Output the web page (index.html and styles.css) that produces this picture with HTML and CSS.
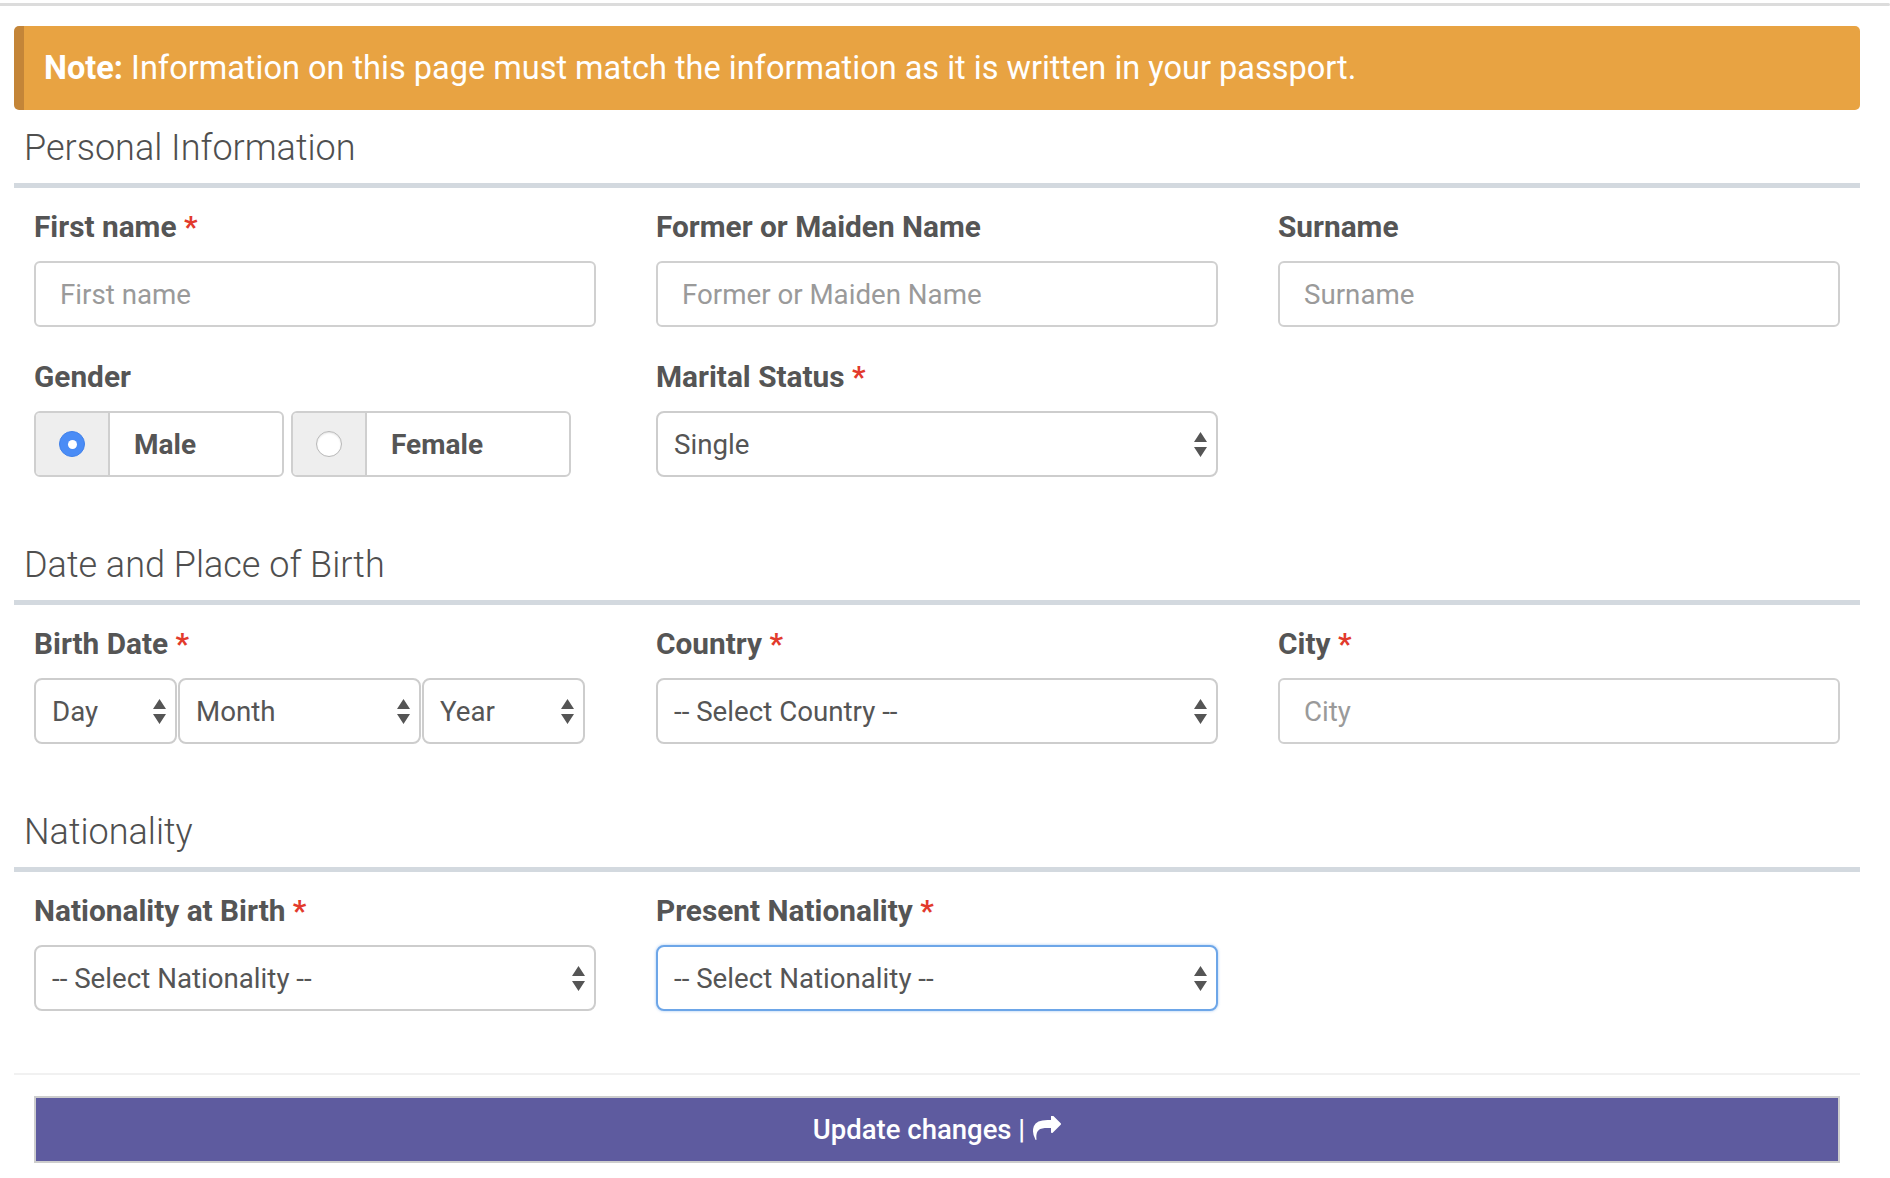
FILE: index.html
```html
<!DOCTYPE html>
<html lang="en">
<head>
<meta charset="utf-8">
<title>Personal Information</title>
<link rel="stylesheet" href="styles.css">
</head>
<body>
<div class="topline"></div>
<div class="page">
  <div class="note"><p class="note-text"><strong>Note:</strong> Information on this page must match the information as it is written in your passport.</p></div>

  <section class="section">
    <h2 class="section-title">Personal Information</h2>
    <div class="fields">
      <div class="field">
        <label class="label">First name <span class="req">*</span></label>
        <input class="input" type="text" placeholder="First name">
      </div>
      <div class="field">
        <label class="label">Former or Maiden Name</label>
        <input class="input" type="text" placeholder="Former or Maiden Name">
      </div>
      <div class="field">
        <label class="label">Surname</label>
        <input class="input" type="text" placeholder="Surname">
      </div>
      <div class="field">
        <label class="label">Gender</label>
        <div class="gender">
          <div class="radio-group">
            <span class="addon"><span class="radio checked"></span></span>
            <span class="radio-label">Male</span>
          </div>
          <div class="radio-group">
            <span class="addon"><span class="radio"></span></span>
            <span class="radio-label">Female</span>
          </div>
        </div>
      </div>
      <div class="field">
        <label class="label">Marital Status <span class="req">*</span></label>
        <div class="select"><span>Single</span><svg class="arrows" viewBox="0 0 13 25" width="13" height="25"><path d="M0 10 L6.5 0 L13 10 Z M0 15 L13 15 L6.5 25 Z"/></svg></div>
      </div>
    </div>
  </section>

  <section class="section">
    <h2 class="section-title">Date and Place of Birth</h2>
    <div class="fields">
      <div class="field">
        <label class="label">Birth Date <span class="req">*</span></label>
        <div class="date">
          <div class="select day"><span>Day</span><svg class="arrows" viewBox="0 0 13 25" width="13" height="25"><path d="M0 10 L6.5 0 L13 10 Z M0 15 L13 15 L6.5 25 Z"/></svg></div>
          <div class="select month"><span>Month</span><svg class="arrows" viewBox="0 0 13 25" width="13" height="25"><path d="M0 10 L6.5 0 L13 10 Z M0 15 L13 15 L6.5 25 Z"/></svg></div>
          <div class="select year"><span>Year</span><svg class="arrows" viewBox="0 0 13 25" width="13" height="25"><path d="M0 10 L6.5 0 L13 10 Z M0 15 L13 15 L6.5 25 Z"/></svg></div>
        </div>
      </div>
      <div class="field">
        <label class="label">Country <span class="req">*</span></label>
        <div class="select"><span>-- Select Country --</span><svg class="arrows" viewBox="0 0 13 25" width="13" height="25"><path d="M0 10 L6.5 0 L13 10 Z M0 15 L13 15 L6.5 25 Z"/></svg></div>
      </div>
      <div class="field">
        <label class="label">City <span class="req">*</span></label>
        <input class="input" type="text" placeholder="City">
      </div>
    </div>
  </section>

  <section class="section">
    <h2 class="section-title">Nationality</h2>
    <div class="fields">
      <div class="field">
        <label class="label">Nationality at Birth <span class="req">*</span></label>
        <div class="select"><span>-- Select Nationality --</span><svg class="arrows" viewBox="0 0 13 25" width="13" height="25"><path d="M0 10 L6.5 0 L13 10 Z M0 15 L13 15 L6.5 25 Z"/></svg></div>
      </div>
      <div class="field">
        <label class="label">Present Nationality <span class="req">*</span></label>
        <div class="select focus"><span>-- Select Nationality --</span><svg class="arrows" viewBox="0 0 13 25" width="13" height="25"><path d="M0 10 L6.5 0 L13 10 Z M0 15 L13 15 L6.5 25 Z"/></svg></div>
      </div>
    </div>
  </section>

  <div class="divider"></div>
  <button class="btn" type="button"><span>Update changes |</span><svg class="share" viewBox="0 160 1792 1472" width="28" height="24"><path d="M1792 640q0 26-19 45l-512 512q-19 19-45 19t-45-19-19-45v-256h-224q-98 0-175.5 6t-154 21.5-133 42.5-105.5 69.5-80 101-48.5 138.5-17.5 181q0 55 5 123 0 6 2.5 23.5t2.5 26.5q0 15-8.5 25t-23.5 10q-16 0-28-17-7-9-13-22t-13.5-30-10.5-24q-127-285-127-451 0-199 53-333 162-403 875-403h224v-256q0-26 19-45t45-19 45 19l512 512q19 19 19 45z"/></svg></button>
</div>
</body>
</html>
```

FILE: styles.css
```css
body {
  margin: 0;
  font-family: Roboto, "Liberation Sans", Arial, sans-serif;
  color: #555;
  background: #fff;
}

.topline {
  height: 3px;
  margin-top: 3px;
  background: #dcdcdc;
  border-radius: 0 2px 2px 0;
}

.page {
  padding: 0 30px 0 14px;
}

.note {
  margin-top: 20px;
  height: 84px;
  box-sizing: border-box;
  display: flex;
  align-items: center;
  background: #e8a342;
  border-left: 10px solid #c48538;
  border-radius: 5px;
  padding-left: 20px;
  color: #fff;
}

.note-text {
  margin: 0;
  font-size: 32.5px;
  line-height: 40px;
}

.note-text strong {
  font-weight: 700;
}

.section-title {
  margin: 18px 0 0;
  padding: 0 10px 15px;
  font-size: 36px;
  font-weight: 300;
  line-height: 40px;
  color: #4f4f4f;
  border-bottom: 5px solid #d3d9df;
}

.section + .section .section-title {
  margin-top: 68px;
}

.fields {
  display: grid;
  grid-template-columns: repeat(3, 562px);
  column-gap: 60px;
  row-gap: 33px;
  padding: 22px 20px 0;
}

.label {
  display: block;
  font-size: 29.8px;
  font-weight: 700;
  line-height: 34px;
  margin-bottom: 17px;
  color: #555;
}

.req {
  color: #e23a2c;
}

.input {
  display: block;
  box-sizing: border-box;
  width: 100%;
  height: 66px;
  margin: 0;
  padding: 0 24px;
  border: 2px solid #d0d0d0;
  border-radius: 6px;
  font-family: Roboto, "Liberation Sans", Arial, sans-serif;
  font-size: 27.7px;
  color: #555;
  background: #fff;
  outline: none;
}

.input::placeholder {
  color: #9a9a9a;
}

.select {
  box-sizing: border-box;
  height: 66px;
  display: flex;
  align-items: center;
  justify-content: space-between;
  padding: 0 9px 0 16px;
  border: 2px solid #cdcdcd;
  border-radius: 8px;
  font-size: 27.7px;
  color: #555;
  background: #fff;
}

.select.focus {
  border-color: #6da6e8;
  box-shadow: 0 0 3px rgba(102, 160, 233, 0.6);
}

.arrows {
  fill: #555;
  flex: none;
}

.date {
  display: flex;
  gap: 1px;
}

.day { width: 143px; }
.month { width: 243px; }
.year { width: 163px; }

.gender {
  display: flex;
  gap: 7px;
}

.radio-group {
  display: flex;
  height: 66px;
  box-sizing: border-box;
  border: 2px solid #cfcfcf;
  border-radius: 6px;
  overflow: hidden;
}

.addon {
  width: 72px;
  background: #eeeeee;
  border-right: 2px solid #cfcfcf;
  display: flex;
  align-items: center;
  justify-content: center;
}

.radio-label {
  display: flex;
  align-items: center;
  padding: 0 86px 0 24px;
  font-size: 28px;
  font-weight: 700;
  color: #555;
}

.radio {
  width: 26px;
  height: 26px;
  border-radius: 50%;
  box-sizing: border-box;
  background: #fff;
  border: 1px solid #b8b8b8;
  box-shadow: inset 0 1px 2px rgba(0, 0, 0, 0.12);
  display: flex;
  align-items: center;
  justify-content: center;
}

.radio.checked {
  background: #4a8cf6;
  border-color: #3f80ea;
  box-shadow: none;
}

.radio.checked::after {
  content: "";
  width: 9px;
  height: 9px;
  border-radius: 50%;
  background: #fff;
}

.divider {
  height: 2px;
  margin-top: 62px;
  background: #f1f1f1;
}

.btn {
  display: flex;
  align-items: center;
  justify-content: center;
  box-sizing: border-box;
  width: calc(100% - 40px);
  height: 67px;
  margin: 21px 20px 0;
  padding: 0;
  background: #5e5b9f;
  border: 2px solid #cdcdcd;
  color: #fff;
  font-family: Roboto, "Liberation Sans", Arial, sans-serif;
  font-size: 27.5px;
  font-weight: 500;
}

.share {
  fill: #fff;
  margin-left: 8px;
  margin-top: -4px;
}
```
